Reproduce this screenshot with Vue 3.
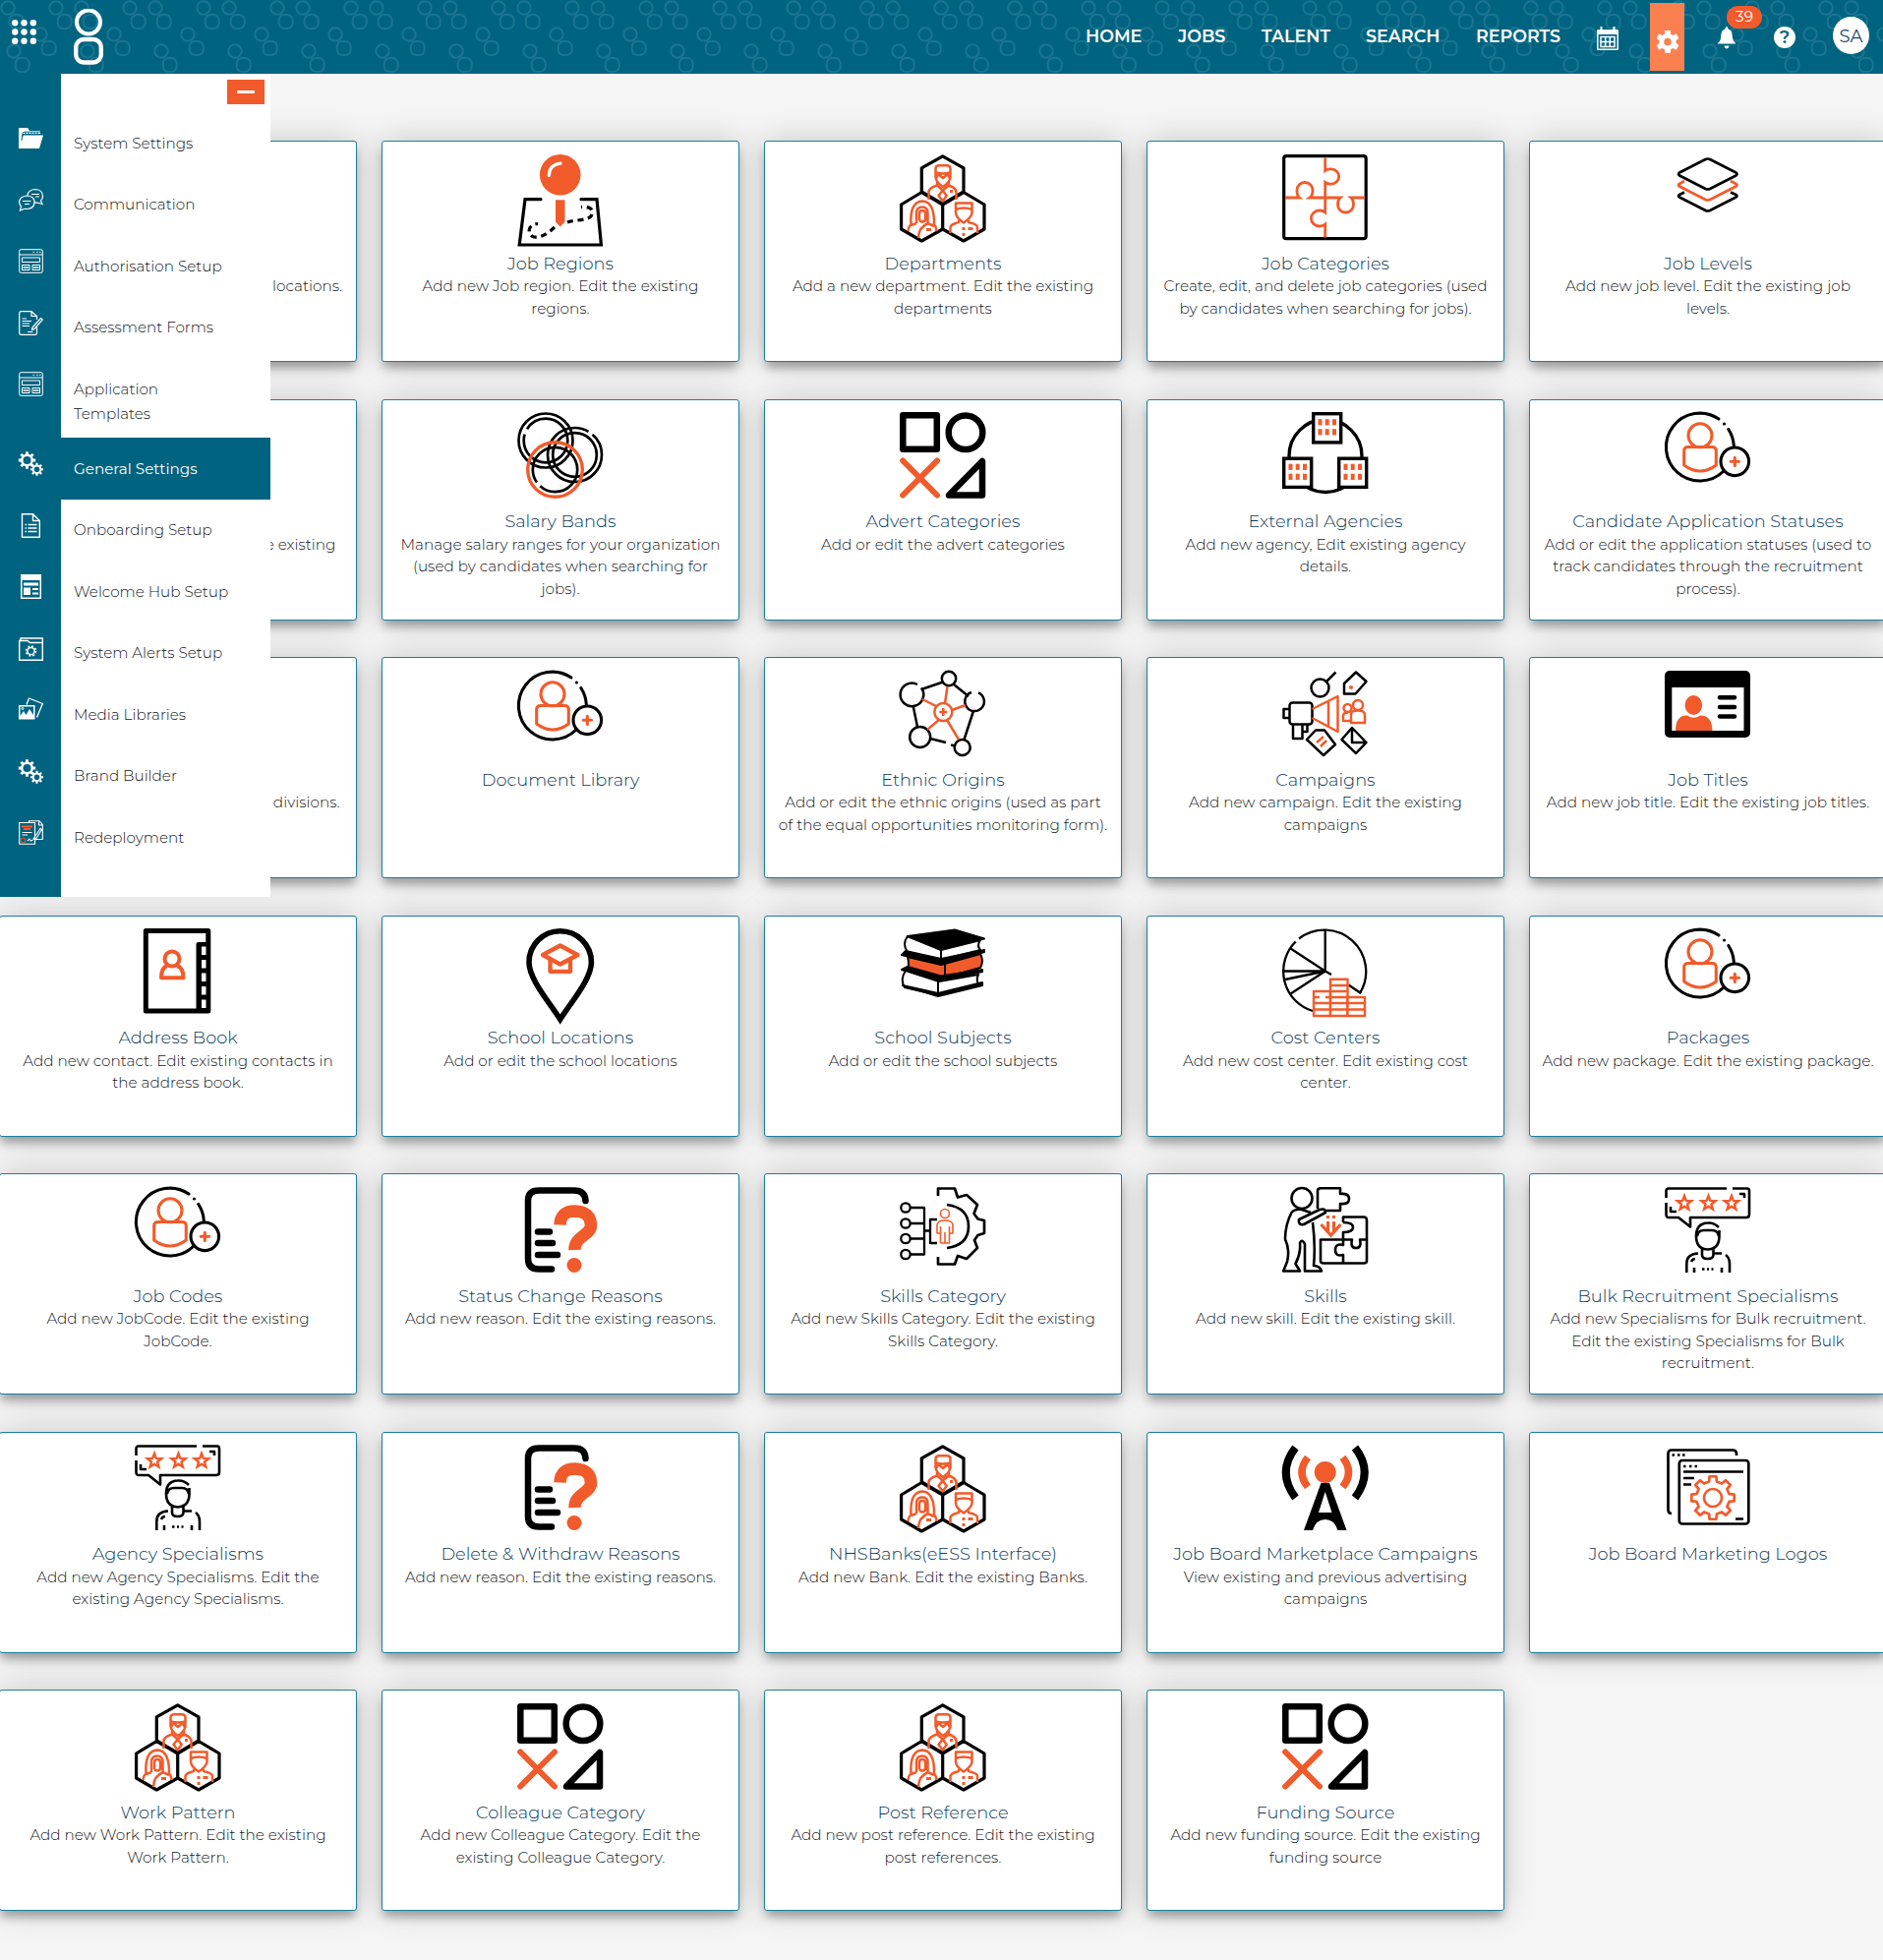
<script setup>
function gear(cx, cy, ro, ri, n) {
  const pts = []
  const step = (Math.PI * 2) / n
  for (let i = 0; i < n; i++) {
    const a = i * step - Math.PI / 2
    for (const [d, r] of [[-0.29, ri], [-0.2, ro], [0.2, ro], [0.29, ri]]) {
      pts.push(`${(cx + r * Math.cos(a + d * step)).toFixed(2)} ${(cy + r * Math.sin(a + d * step)).toFixed(2)}`)
    }
  }
  return 'M' + pts.join('L') + 'Z'
}

function star(cx, cy, r) {
  const pts = []
  for (let i = 0; i < 10; i++) {
    const a = (i * Math.PI) / 5 - Math.PI / 2
    const q = i % 2 ? r * 0.42 : r
    pts.push(`${(cx + q * Math.cos(a)).toFixed(2)} ${(cy + q * Math.sin(a)).toFixed(2)}`)
  }
  return 'M' + pts.join('L') + 'Z'
}

function building(x, y) {
  let s = `<rect x="${x + 1.7}" y="${y + 1.7}" width="28" height="29.2" fill="#fff" stroke-width="3.4" stroke-linejoin="miter"/>`
  for (const dx of [6.5, 13.7, 21]) for (const dy of [7.2, 17.2]) s += `<rect class="art-of" x="${x + dx}" y="${y + dy}" width="4" height="6.2"/>`
  return s
}

const art = {
  regions: `<g stroke-width="3.2" stroke-linejoin="miter"><path stroke-linecap="round" d="M24 45.7H8L2.2 92H85.4L81 45.7H65"/><path stroke-dasharray="6 4.6" d="M51 69C58 66 74 68 76 61C78 54 71 53 65 53.5M38 74C32 80 24 85 17 84C10 82 10 71 21 70.5"/></g><circle class="art-of" cx="43.7" cy="20.8" r="20.8"/><path stroke="#fff" stroke-width="3.2" stroke-linecap="round" d="M32.3 21.5Q32.5 10.5 44 9.2"/><path class="art-of" d="M39 46.3h9.5V68.5L43.7 73.5L39 68.5Z"/>`,
  people: `<g stroke-width="3.2"><path d="M43.7 1.8L65 13.8V38L43.7 50.5L22.3 38V13.8ZM22.3 38.5L43.7 51V76L22.3 88L1.6 76V51ZM65 38.5L86 51V76L65 88L43.7 76V51Z"/></g><g class="art-o" stroke-width="2.5"><path d="M36.5 24V14.5Q36.5 11.2 40 11.2H48Q51.5 11.2 51.5 14.5V24Q50 29 44 33Q38 29 36.5 24M36.5 18.5Q44 20.5 51.5 18.5M37 25Q38 20 41 21.5L44 24L47 21.5Q50 20 51 25M29.5 46V38Q30 34 38 31.5V28M57.5 46V38Q57 34 50 31.5V28M38 31.5L43.7 36.5L50 31.5M43.7 36.5L39.5 42L43.7 47.5L47.7 42Z"/><path d="M57 60V49.5H73.5V60Q72 65 65 69.5Q58 65 57 60M57 56Q65 53 73.5 56M51.5 80V74Q52 71 60 69V65M79 80V74Q79 71 70 69V65"/><path d="M8.5 78Q9 73 11.5 71.5Q10 48 23 47.5Q35.5 48 35 71.5Q37 73 37.5 78M17 70V60Q17 53.5 23 53.5Q28.5 53.5 28.5 60V70M20 67V60Q20 57 23 57Q26 57 26 60V67Q23 70 20 67M17 70L11.5 72M29 70Q19 74 19 85M28.5 70L35 73"/></g><path class="art-of" d="M51 36h3v3h-3zM63.5 74h3v3h-3zM69.5 74h5v3h-5zM63.5 80h3v3h-3zM27 75h5v3h-5z"/>`,
  puzzle: `<rect x="1.7" y="1.7" width="83.5" height="84" rx="2.5" stroke-width="3.2"/><path class="art-o" stroke-width="2.8" stroke-linejoin="miter" d="M43.7 3.5V16.5A8.6 7.7 0 1 1 43.7 28.5V59A8.6 8 0 1 0 43.7 71V84.5M3 44H17.5Q15 42 15 36.5A8 8 0 0 1 31 36.5Q31 42 28 44H59Q56.5 46 56.5 51A8 8 0 0 0 72.5 51Q72.5 46 70 44H84"/>`,
  layers: `<g stroke-width="2.7"><path d="M20 38.5L15 41Q13 42.3 15 43.5L41.5 57Q43.7 58 46 57L72.5 43.5Q74.5 42.3 72.5 41L67 38.5"/><path class="art-o" d="M20 27L15 30Q13 31.2 15 32.5L41.5 46Q43.7 47 46 46L72.5 32.5Q74.5 31.2 72.5 30L67 27"/><path fill="#fff" d="M15 18.5L41.5 5Q43.7 4 46 5L72.5 18.5Q74.5 20 72.5 21.5L46 35Q43.7 36 41.5 35L15 21.5Q13 20 15 18.5Z"/></g>`,
  rings: `<g stroke-width="2.7"><circle cx="29" cy="29" r="27.5"/><circle cx="29" cy="29" r="22.3" stroke-dasharray="76 6 60"/><circle cx="58.5" cy="43.5" r="27.5" stroke-dasharray="144 5 30"/><circle cx="58.5" cy="43.5" r="22.3"/><circle cx="38.5" cy="58.5" r="22.7" stroke-dasharray="52 5 90"/></g><circle class="art-o" cx="38.5" cy="58.5" r="27.8" stroke-width="3.4"/>`,
  shapes: `<g stroke-width="6.5"><rect x="3.3" y="3.3" width="34.5" height="34.5"/><circle cx="67" cy="20.7" r="17.3"/><path d="M84 50V84.5H50Z"/><path class="art-o" stroke-width="6" stroke-linecap="round" d="M3.2 49.5L38 84.5M38 49.5L3.2 84.5"/></g>`,
  agencies: `<circle cx="44" cy="44.5" r="37" stroke-width="3.4"/>${building(30, 0)}${building(0, 45.5)}${building(56, 45.5)}`,
  person: `<g stroke-width="3.1"><path stroke-linecap="round" d="M55 7A34.4 34.4 0 1 0 60 60M64.8 17.5A34.4 34.4 0 0 1 70.3 34"/><circle cx="71.3" cy="50.3" r="14.3"/><circle cx="60.5" cy="12" r="1.6" fill="#000" stroke="none"/><g class="art-o"><circle cx="36" cy="23.8" r="12"/><path d="M19.7 54V39.5Q19.7 35.5 24 35.5H48Q52.3 35.5 52.3 39.5V54Q44.5 60 36 60T19.7 54Z"/><path stroke-linecap="round" d="M71.3 46.2V54.5M67.2 50.3H75.5"/></g></g>`,
  network: `<g stroke-width="2.5"><path d="M44 11.5L22 19M55 14L70 26M13.5 35L18 57M75 41L65.5 70M31 69L47 73M52 75.5L57 76.5"/><circle cx="50" cy="8" r="7.2"/><path d="M18 14A11.8 11.8 0 1 0 22 17.5M73 22A9.8 9.8 0 1 0 80 22.3"/><circle cx="20.7" cy="67.5" r="10.5"/><circle cx="63.7" cy="78" r="8"/><g class="art-o"><circle cx="44.3" cy="42" r="9"/><path d="M44.3 38V46M40.3 42H48.3M46 33L48.5 16M37 36L23 29M53 40L67 35M40 50L28 60M48 50L60 70"/></g></g>`,
  campaign: `<g stroke-width="2.5"><circle cx="38.5" cy="17.5" r="9"/><path d="M45 11L54.5 1.5M75 1.5L85.5 11L74.5 23.5H63V13Z"/><rect x="7.5" y="32.5" width="23" height="22" rx="3"/><path d="M7 39H1.5V48H7M11 55V69H20.5V55M20.5 62H25.5V55M34 60.5H43L54 75L42 86L25 70ZM71 58L85.5 73L75 84L60.5 70ZM71 59V73H85"/><g class="art-o"><path d="M30.5 39L56.5 26V62L30.5 48M47 31V58M35 73L42 67M39 77L45 71"/><circle cx="77" cy="35" r="5"/><circle cx="66.5" cy="38" r="4"/><path d="M70 53V44Q70 40.5 77 40.5Q84 40.5 84 45V53ZM70 51H62V46Q62 42.5 67 42.5"/></g></g><circle class="art-of" cx="70" cy="17" r="2"/>`,
  idcard: `<rect width="87" height="68" rx="5" fill="#000" stroke="none"/><path fill="#fff" stroke="none" d="M7.3 17H80.5V61H7.3Z"/><path class="art-of" d="M11 61Q11 45 23 45.5Q29.5 50 36 45.5Q48 45 48.5 61Z"/><ellipse class="art-of" cx="29.3" cy="35" rx="8.8" ry="10"/><path stroke-width="4.6" stroke-linecap="round" d="M56 27.2H71M56 37H71M56 46.5H71"/>`,
  book: `<rect x="11.3" y="2.5" width="63.5" height="81.5" stroke-width="5"/><path fill="#000" stroke="none" d="M62.5 16Q62.5 14 64.5 14H77V86H62.5Z"/><path fill="#fff" stroke="none" d="M68 18.5h4.5v8.5h-4.5zM68 32h4.5v8.5h-4.5zM68 45.5h4.5v8.5h-4.5zM68 59h4.5v8.5h-4.5zM68 72.5h4.5v8.5h-4.5z"/><g class="art-o" stroke-width="4"><circle cx="38" cy="31" r="7.5"/><path d="M33 38Q27 40 27 50.3H49.5Q49.5 40 43 38"/></g>`,
  pin: `<path stroke-width="5.6" stroke-linejoin="miter" d="M43.7 92.5C31 73 12 51 12 34.5A31.7 31.7 0 0 1 75.4 34.5C75.4 51 56.4 73 43.7 92.5Z"/><g class="art-o" stroke-width="4.3"><path d="M43.7 17.5L61.5 27L43.7 36.5L26 27ZM33.5 31V43.8H54V31"/></g>`,
  books: `<g stroke-width="2"><path fill="#fff" d="M8 8Q2 16 8 24L42 32L82 22Q78 18 82 12L42 22Z"/><path fill="#000" d="M8 8L56 1.5L86 10.5L42 21Z"/><path fill="#000" d="M2 27L42 37L86 24V22L42 31L6 23Z"/><path class="art-fillo" d="M8 29Q10 37 8 42L46 50L82 40Q86 33 82 26L42 37Z"/><path d="M46 50V37"/><path fill="#000" d="M2 42L8 39L42 48.5L84 42V44L40 54Z"/><path fill="#fff" d="M6 43Q0 52 5 60L39 68L81 58Q77 53 80 47L40 54Z"/><path d="M39 54V67M42 21V32"/><path fill="#000" d="M3 58L39 66L84 55V58L39 69Z"/></g>`,
  pie: `<g stroke-width="2.3"><path d="M31 84A42.3 42.3 0 0 1 13.7 13.5M17 10.5A42.3 42.3 0 0 1 79 66"/><path d="M43.7 1.5V43.5L8.5 20.5M43.7 43.5H1.5M43.7 43.5L3 52M43.7 43.5L8.5 66.5M43.7 43.5L50 47M67.5 57.5L80 66"/></g><g class="art-fillw art-o" stroke-width="2.4"><rect x="32" y="64" width="17" height="25"/><rect x="49" y="51.8" width="17.5" height="37.2"/><rect x="66.5" y="70" width="17.5" height="19"/><path d="M49 58H66M49 64H66M49 70H66M32 70H38M44 70H49M32 76H84M32 82.5H84"/></g>`,
  question: `<path stroke-width="6.5" stroke-linecap="round" d="M35 83.5H22Q11 83.5 11 73V14Q11 3.5 22 3.5H58Q69 3.5 69.5 14"/><path stroke-width="6.5" stroke-linecap="round" d="M21 45.5H33M21 57H36M21 69H41"/><path class="art-o" stroke-width="12.5" d="M43.5 38.5Q44 24.5 58.5 24.5Q75 25 75 39C75 49 58 50 58.5 64"/><circle class="art-of" cx="58" cy="79.5" r="7.5"/>`,
  skillcat: `<g stroke-width="2.3"><circle cx="6" cy="21" r="4.7"/><circle cx="6" cy="37" r="4.7"/><circle cx="6" cy="52.5" r="4.7"/><circle cx="6" cy="68.5" r="4.7"/><path d="M11 21H25V68.5H11M11 37H25M11 52.5H25M25 44.5H31M38 33H31V57H38"/><path stroke-width="2.7" d="M48 18Q70 21 70 40T48 62M39 9V1.5H56L59 10.5L68 8L79 18L75.5 27L79.5 32.5L86 34V47L79.5 49L76 54L79 62L68 73L59 70L56 78.5H39V71"/><g class="art-o" stroke-width="1.6"><circle cx="46" cy="27" r="4.5"/><path d="M41.5 57H50.5V46M41.5 57V47H38V39Q38 34 46 34T54 39V47H50.5V40M41.5 40V47M46 46V57"/></g></g>`,
  skills: `<g stroke-width="2.6"><circle cx="20" cy="11.5" r="10.5"/><path d="M10 25Q3 38 3 53Q8 64 5 76L1.2 85.5H18L13.5 78Q19 68 18 57Q20 52 23 58Q23 72 23 85.5H40Q38 80 32 80Q34 60 31 36M10 25Q14 22 20 23L29 26M36 22V4Q36 1.2 39 1.2H59V7Q68 6 68 12T59 17V24H43"/><path fill="#fff" d="M17 33L38 23Q44 21 44 26L22 38Q16 39 17 33Z"/><path d="M62 36V30.5H83Q86 30.5 86 34V75Q86 77.5 83 77.5H42Q39 77.5 39 75V53.5H62V46Q72 46 72 41T62 36M62 53.5H71Q69 62 75 62T79 53.5H86M62 53.5V59Q54 57 54 64T62 69V77"/><path class="art-o" stroke-width="3.2" stroke-linejoin="miter" d="M39.5 38L49.5 49L59.5 38M46.5 29V32M52.5 29V32M46.5 35V46M52.5 35V46"/></g>`,
  rating: `<g stroke-width="2.6"><path d="M1.5 11V4Q1.5 1.5 4 1.5H63M69 1.5H84Q86 1.5 86 4V28Q86 31 83 31H26V40.5L14 31H4Q1.5 31 1.5 28V16M6 20V25H12M76 7H81V11"/><path d="M55 41Q50 36 43.7 36.5Q32 37 32 50Q32 63 43.7 63.5Q55.5 63 55.5 50V44M33 50Q34 44 40 44H48Q54 44 55 50M38 63V69Q38 73 43.7 73T49.5 69V63M22.3 87V78Q22.3 68 34 67.5M50 67.5H58M62 69Q66 72 66 78V87M27 76Q28 73 31 73M30 82V87M58 82V87M38 83.5H40.5M43 83.5H45M47.5 83.5H49.5"/></g><path class="art-o" stroke-width="2.4" stroke-linejoin="miter" d="${star(20, 16.5, 7.5)}${star(44.5, 16.5, 7.5)}${star(68, 16.5, 7.5)}"/>`,
  antenna: `<g stroke-width="8"><path d="M13.5 3Q-6 28 13.5 54M74 3Q93.5 28 74 54"/><path class="art-o" stroke-width="7.5" d="M26 13Q14 28 26 43M61.5 13Q73.5 28 61.5 43"/></g><path fill="#000" fill-rule="evenodd" stroke="none" d="M39.5 39H48L65.5 87H56.5Q53 76 43.7 76T31 87H22ZM43.7 48L37 69H50.5Z"/><circle class="art-of" cx="43.7" cy="28" r="11"/>`,
  logos: `<g stroke-width="2.7"><path d="M7 70Q3.5 70 3.5 66V9Q3.5 5.5 7 5.5H69Q73 5.5 73 9V11M7.5 10.5H10M13 10.5H15.5M18 10.5H20.5"/><rect x="14.8" y="16" width="70.5" height="64.5" rx="3"/><path d="M19 22H21.5M25 22H27.5M30.5 22H33M19 27.5H80M19 34H30M19 40.5H27M72 75.5H80"/></g><g class="art-o" stroke-width="2.7"><path d="${gear(49, 54, 22, 17, 8)}"/><circle cx="49" cy="54" r="9"/></g>`
}

const gears = `<path fill="#fff" fill-rule="evenodd" stroke="none" d="${gear(8.5, 9, 8.8, 6.4, 8)}M12.5 9A4 4 0 1 0 4.5 9A4 4 0 1 0 12.5 9Z"/><path fill="#fff" fill-rule="evenodd" stroke="none" d="${gear(18.5, 18.3, 6.6, 4.8, 8)}M21.3 18.3A2.8 2.8 0 1 0 15.7 18.3A2.8 2.8 0 1 0 21.3 18.3Z"/>`
const layout = `<rect x=".7" y=".7" width="23.6" height="23.6" rx="1.5"/><path d="M1 6H24M14.5 3.3H16M18 3.3H19.5M21 3.3H22.5"/><path d="M3.5 9H21.5V13.5H3.5ZM3.5 16.5H11V21.5H3.5ZM14 16.5H21.5V21.5H14Z"/><path d="M4.5 19H10M15 19H20.5" stroke-width="1.6"/>`
const menu = [
  { label: 'System Settings', icon: `<path fill="#fff" stroke="none" d="M0 2H9L11 5H22V8H4L1.5 20V23H0Z"/><path fill="#fff" stroke="none" d="M5 9.5H25L21 23H.5L2 14Z"/><path stroke="#006380" d="M3 15L4 7.5Q4.2 6.2 6 6.2H22.5M7 6.5V8M10 6.5V8M13 6.5V8M16 6.5V8M19 6.5V8"/>` },
  { label: 'Communication', icon: `<path stroke-width="1.2" d="M9 7.5Q10 1.5 17 1.5Q24.5 2 24.5 8.5Q24.5 11.5 22.5 13L24 16.5L19 15Q17.5 15.3 16 15M8.5 8Q16 8.5 16 14.5Q16 21 8.5 21.5L6 21.3L1.5 23L2.5 19Q.6 17 .6 14.5Q1 8.5 8.5 8ZM13 6.5H21M17 9H21M4 13.5H12.5M6 16.5H11"/>` },
  { label: 'Authorisation Setup', icon: layout },
  { label: 'Assessment Forms', icon: `<path stroke-width="1.2" d="M18.5 16V22.5Q18.5 24.3 17 24.3H2.5Q.7 24.3 .7 22.5V2.5Q.7 .7 2.5 .7H13L18.5 5.5V9M13 1V5.5H18M3.5 8H8M3.5 10.5H13M3.5 13H11M3.5 15.5H11M9 21.5H14.5M14 17L22.5 7.5L24.3 9L16 18.5L13.5 19.5Z"/>` },
  { label: 'Application Templates', icon: layout, two: true },
  { label: 'General Settings', icon: gears, active: true },
  { label: 'Onboarding Setup', icon: `<path stroke-width="1.4" d="M3.5 .7H14.5L21.3 7.5V24.3H3.5ZM14.5 1V7.5H21M6.5 11.5H8M9.5 11.5H18.5M6.5 15H8M9.5 15H18.5M6.5 18.5H8M9.5 18.5H18.5"/>` },
  { label: 'Welcome Hub Setup', icon: `<path fill="#fff" fill-rule="evenodd" stroke="none" d="M2 0H23V25H2ZM3.5 6V23.5H21.5V6ZM5 8.5H20V11.5H5ZM5 13.5H12V21H5ZM14 14H20V16H14ZM14 18.5H20V20.5H14Z"/>` },
  { label: 'System Alerts Setup', icon: `<path stroke-width="1.4" d="M.7 4.5H9L11.5 6.5H24.3V24.3H.7ZM2 4V2H24.3V7"/><circle cx="12.5" cy="15" r="3.6" stroke-width="1.5"/><circle cx="12.5" cy="15" r="5" stroke-width="1.6" stroke-dasharray="1.96"/>` },
  { label: 'Media Libraries', icon: `<path stroke-width="1.3" d="M8 7.5L10.5 1L24.3 6.5L18.5 20.5"/><path fill="#fff" stroke="none" fill-rule="evenodd" d="M0 8H16.5V22.5H0ZM1.5 9.5V19L5 14L7.5 18L11 12L15 18V9.5Z"/><circle cx="4" cy="11.5" r="1"/>` },
  { label: 'Brand Builder', icon: gears },
  { label: 'Redeployment', icon: `<path stroke-width="1.1" d="M.7 2.5H16.5V24.3H.7ZM10.5 2V.7H21L24.3 4.5V19.5H17M20.5 1V5H24M3.5 12.5H13.5M3.5 15H9M9 21L11 19L12.5 21L14.5 20M15 19L22 8.5L23.5 9.5L17 20Z"/><path class="art-o" stroke-width="2" d="M3 6.5H14M5 9H12"/><circle class="art-o" cx="4.5" cy="20.5" r="2.3"/>` }
]

const cards = [
  { tail: 'locations.', end: 14 },
  { icon: 'regions', title: 'Job Regions', lines: ['Add new Job region. Edit the existing', 'regions.'] },
  { icon: 'people', title: 'Departments', lines: ['Add a new department. Edit the existing', 'departments'] },
  { icon: 'puzzle', title: 'Job Categories', lines: ['Create, edit, and delete job categories (used', 'by candidates when searching for jobs).'] },
  { icon: 'layers', title: 'Job Levels', lines: ['Add new job level. Edit the existing job', 'levels.'] },
  { tail: 'the existing', end: 20.5 },
  { icon: 'rings', title: 'Salary Bands', lines: ['Manage salary ranges for your organization', '(used by candidates when searching for', 'jobs).'] },
  { icon: 'shapes', title: 'Advert Categories', lines: ['Add or edit the advert categories'] },
  { icon: 'agencies', title: 'External Agencies', lines: ['Add new agency, Edit existing agency', 'details.'] },
  { icon: 'person', title: 'Candidate Application Statuses', lines: ['Add or edit the application statuses (used to', 'track candidates through the recruitment', 'process).'] },
  { tail: 'divisions.', end: 16.5 },
  { icon: 'person', title: 'Document Library', lines: [] },
  { icon: 'network', title: 'Ethnic Origins', lines: ['Add or edit the ethnic origins (used as part', 'of the equal opportunities monitoring form).'] },
  { icon: 'campaign', title: 'Campaigns', lines: ['Add new campaign. Edit the existing', 'campaigns'] },
  { icon: 'idcard', title: 'Job Titles', lines: ['Add new job title. Edit the existing job titles.'] },
  { icon: 'book', title: 'Address Book', lines: ['Add new contact. Edit existing contacts in', 'the address book.'] },
  { icon: 'pin', title: 'School Locations', lines: ['Add or edit the school locations'] },
  { icon: 'books', title: 'School Subjects', lines: ['Add or edit the school subjects'] },
  { icon: 'pie', title: 'Cost Centers', lines: ['Add new cost center. Edit existing cost', 'center.'] },
  { icon: 'person', title: 'Packages', lines: ['Add new package. Edit the existing package.'] },
  { icon: 'person', title: 'Job Codes', lines: ['Add new JobCode. Edit the existing', 'JobCode.'] },
  { icon: 'question', title: 'Status Change Reasons', lines: ['Add new reason. Edit the existing reasons.'] },
  { icon: 'skillcat', title: 'Skills Category', lines: ['Add new Skills Category. Edit the existing', 'Skills Category.'] },
  { icon: 'skills', title: 'Skills', lines: ['Add new skill. Edit the existing skill.'] },
  { icon: 'rating', title: 'Bulk Recruitment Specialisms', lines: ['Add new Specialisms for Bulk recruitment.', 'Edit the existing Specialisms for Bulk', 'recruitment.'] },
  { icon: 'rating', title: 'Agency Specialisms', lines: ['Add new Agency Specialisms. Edit the', 'existing Agency Specialisms.'] },
  { icon: 'question', title: 'Delete & Withdraw Reasons', lines: ['Add new reason. Edit the existing reasons.'] },
  { icon: 'people', title: 'NHSBanks(eESS Interface)', lines: ['Add new Bank. Edit the existing Banks.'] },
  { icon: 'antenna', title: 'Job Board Marketplace Campaigns', lines: ['View existing and previous advertising', 'campaigns'] },
  { icon: 'logos', title: 'Job Board Marketing Logos', lines: [] },
  { icon: 'people', title: 'Work Pattern', lines: ['Add new Work Pattern. Edit the existing', 'Work Pattern.'] },
  { icon: 'shapes', title: 'Colleague Category', lines: ['Add new Colleague Category. Edit the', 'existing Colleague Category.'] },
  { icon: 'people', title: 'Post Reference', lines: ['Add new post reference. Edit the existing', 'post references.'] },
  { icon: 'shapes', title: 'Funding Source', lines: ['Add new funding source. Edit the existing', 'funding source'] }
]

const nav = ['HOME', 'JOBS', 'TALENT', 'SEARCH', 'REPORTS']
const settingsGear = gear(11, 11.5, 11.5, 8.2, 6)
const motif = [[8, 8], [57, 8], [41, 35], [14, 52], [83, 8], [89, 52], [-18, 8]]
</script>

<template>
  <div class="page">
    <header class="topbar">
      <svg class="pattern" width="1915" height="75" aria-hidden="true">
        <defs>
          <pattern id="motif" width="75" height="75" patternUnits="userSpaceOnUse">
            <g v-for="([x, y], i) in motif" :key="i" fill="none" stroke="#1a7590" stroke-width="2">
              <circle :cx="x" :cy="y" r="6.7" />
              <rect :x="x + 1.7" :y="y + 7" width="14" height="14" rx="5.5" />
            </g>
          </pattern>
        </defs>
        <rect width="1915" height="75" fill="url(#motif)" />
      </svg>
      <svg class="apps" width="25" height="25" viewBox="0 0 25 25" fill="#fff">
        <template v-for="r in 3" :key="r">
          <circle v-for="c in 3" :key="c" :cx="c * 9.3 - 6.1" :cy="r * 9.3 - 6.1" r="3.2" />
        </template>
      </svg>
      <svg class="logo" width="30" height="58" viewBox="0 0 30 58" fill="none" stroke="#fff" stroke-width="4">
        <circle cx="15" cy="13.5" r="12" />
        <rect x="2.2" y="31" width="25.6" height="23.5" rx="8" stroke-width="4.4" />
      </svg>
      <nav class="nav">
        <a v-for="n in nav" :key="n" :class="n.toLowerCase()">{{ n }}</a>
      </nav>
      <svg class="calendar" width="22" height="24" viewBox="0 0 22 24" fill="none" stroke="#fff">
        <path stroke-width="1.5" d="M.8 4H21.2V23.2H.8Z" />
        <path fill="#fff" stroke="none" d="M1 3.5H21V8H1Z" />
        <path stroke-width="2" d="M4.5 0V5M17.5 0V5" />
        <path stroke-width="1.5" d="M4 10.5H18V20.5H4ZM8.7 10.5V20.5M13.3 10.5V20.5M4 15.5H18" />
      </svg>
      <div class="settings">
        <svg width="22" height="23" viewBox="0 0 22 23">
          <path :d="settingsGear" fill="#fff" stroke="#fff" stroke-linejoin="round" />
          <circle cx="11" cy="11.5" r="3.8" fill="#fb8050" />
        </svg>
      </div>
      <div class="alerts">
        <svg width="20" height="23" viewBox="0 0 20 23" fill="#fff">
          <path d="M10 0Q11.5 0 11.5 2.5C16 4 15.5 8 16 12Q16.5 15 19.5 17.5H.5Q3.5 15 4 12C4.5 8 4 4 8.5 2.5Q8.5 0 10 0Z" />
          <path d="M7.5 19.5H12.5Q12 22.5 10 22.5T7.5 19.5Z" />
        </svg>
        <span class="badge">39</span>
      </div>
      <span class="help">?</span>
      <span class="avatar">SA</span>
    </header>

    <main class="grid">
      <article v-for="(c, i) in cards" :key="i" class="card">
        <p v-if="c.tail" class="tail" :style="{ paddingRight: c.end + 'px' }">{{ c.tail }}</p>
        <template v-else>
          <svg class="art" width="88" height="98" viewBox="0 0 88 98" v-html="art[c.icon]" />
          <h2>{{ c.title }}</h2>
          <p v-for="l in c.lines" :key="l">{{ l }}</p>
        </template>
      </article>
    </main>

    <aside class="sidebar">
      <button class="collapse"><span /></button>
      <a v-for="m in menu" :key="m.label" class="item" :class="{ active: m.active, two: m.two }">
        <span class="rail"><svg width="25" height="25" viewBox="0 0 25 25" v-html="m.icon" /></span>
        <span class="label">{{ m.label }}</span>
      </a>
    </aside>
  </div>
</template>

<style>
body {
  background: #f5f5f5;
}
.art-o {
  stroke: #f15b2b;
}
.art-of {
  fill: #f15b2b;
  stroke: none;
}
.art-fillo {
  fill: #f15b2b;
}
.art-fillw {
  fill: #fff;
}
</style>

<style scoped>
.page {
  position: relative;
  width: 1915px;
  height: 1993px;
  overflow: hidden;
  background: #f5f5f5;
  font-family: Montserrat, Inter, "Open Sans", sans-serif;
  font-weight: 300;
  color: #111418;
}
.topbar {
  position: relative;
  display: flex;
  height: 75px;
  background: #006380;
  color: #fff;
}
.pattern {
  position: absolute;
  inset: 0;
}
.topbar > :not(.pattern) {
  position: relative;
  flex: none;
}
.apps {
  margin: 20px 0 0 12px;
}
.logo {
  margin: 9px 0 0 38px;
}
.nav {
  display: flex;
  width: 520px;
  margin-left: 999px;
  font-size: 17.5px;
  font-weight: 600;
  line-height: 74px;
}
.nav a {
  flex: none;
}
.home { width: 94px; }
.jobs { width: 85px; }
.talent { width: 106px; }
.search { width: 112px; }
.calendar {
  margin-top: 27px;
}
.settings {
  display: flex;
  justify-content: center;
  width: 35px;
  height: 69px;
  margin: 3px 0 0 32px;
  background: #fb8050;
}
.settings svg {
  margin-top: 28px;
}
.alerts {
  width: 20px;
  margin: 27px 0 0 33px;
}
.badge {
  position: absolute;
  left: 10px;
  top: -21px;
  width: 36px;
  height: 23px;
  border-radius: 12px;
  background: #f15b2b;
  font-size: 15.2px;
  font-weight: 400;
  line-height: 22px;
  text-align: center;
}
.help {
  width: 22px;
  height: 22px;
  margin: 27px 0 0 38px;
  border-radius: 50%;
  background: #fff;
  color: #006380;
  font-size: 18px;
  font-weight: 600;
  line-height: 22px;
  text-align: center;
}
.avatar {
  width: 37px;
  height: 38px;
  margin: 17px 0 0 38px;
  border-radius: 50%;
  background: #fff;
  color: #24476b;
  font-size: 18px;
  font-weight: 400;
  line-height: 40px;
  text-align: center;
}
.grid {
  display: grid;
  grid-template-columns: repeat(5, 364px);
  grid-auto-rows: 225px;
  gap: 37.5px 25px;
  margin: 68.2px 0 0 -1px;
}
.card {
  box-sizing: border-box;
  padding-top: 12.6px;
  border: 1px solid #1a7f9c;
  border-radius: 3px;
  background: #fff;
  box-shadow: 0 8px 10px -2px rgba(0, 0, 0, 0.3), 0 0 32px rgba(0, 0, 0, 0.19);
  text-align: center;
}
.card h2 {
  margin: 0.9px 0 0;
  color: #0b3a58;
  font-size: 17.8px;
  font-weight: 300;
  line-height: 24px;
  white-space: nowrap;
}
.card p {
  margin: 0;
  font-size: 15.25px;
  line-height: 22.5px;
  white-space: nowrap;
}
.card h2 + p {
  margin-top: 0.5px;
}
.art {
  display: block;
  margin: 0 auto;
  overflow: visible;
  fill: none;
  stroke: #000;
  stroke-linejoin: round;
}
.card .tail {
  padding-top: 123.4px;
  text-align: right;
}
.sidebar {
  position: absolute;
  left: 0;
  top: 75px;
  width: 275px;
  height: 837px;
  background: linear-gradient(90deg, #006380 62.5px, #fff 62.5px);
}
.collapse {
  display: flex;
  align-items: center;
  justify-content: center;
  width: 38px;
  height: 25px;
  margin: 6px 0 8.25px 231px;
  padding: 0;
  border: 0;
  background: #f15b2b;
}
.collapse span {
  width: 18px;
  height: 3px;
  border-radius: 1px;
  background: #fff;
}
.item {
  display: flex;
  box-sizing: border-box;
  height: 62.5px;
  font-size: 15.2px;
  line-height: 25px;
}
.item.two {
  height: 81.2px;
}
.item.active {
  background: #006380;
  color: #fff;
  font-weight: 400;
}
.rail {
  width: 75px;
  padding: 13.8px 0 0 19px;
  box-sizing: border-box;
}
.rail svg {
  display: block;
  fill: none;
  stroke: #fff;
  overflow: visible;
}
.label {
  width: 165px;
  padding-top: 18.4px;
}
.two .label {
  width: 120px;
}
</style>
